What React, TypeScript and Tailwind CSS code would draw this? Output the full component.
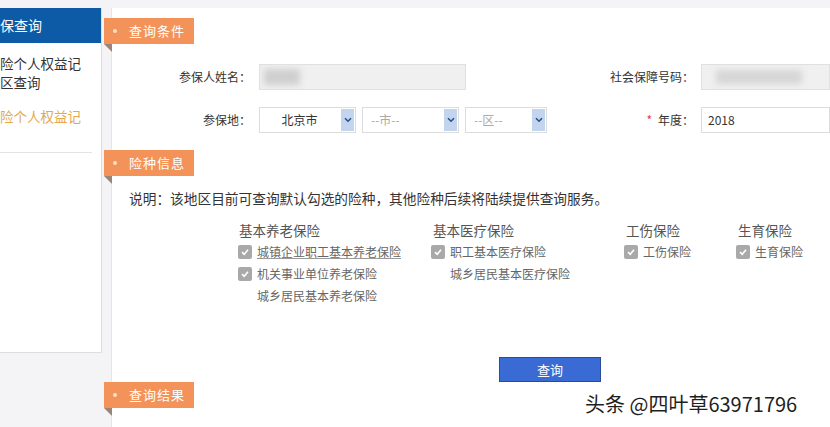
import React from 'react'

const font = { fontFamily: '"Noto Sans CJK SC", "Noto Sans", sans-serif' }

const Tab = ({ label }: { label: string }) => (
  <div className="relative -ml-[8px] w-[90px]">
    <div className="h-[26px] bg-[#f3935a] flex items-center text-white text-[13px]">
      <span className="ml-[9px] w-[4px] h-[4px] rounded-full bg-[#fde2c8]" />
      <span className="ml-[12px] tracking-[1px]">{label}</span>
    </div>
    {/* ribbon fold */}
    <div className="w-0 h-0 border-t-[8px] border-t-[#9c8478] border-l-[8px] border-l-transparent" />
  </div>
)

const Check = () => (
  <span className="w-[14px] h-[14px] rounded-[2px] bg-[#a9a9a9] flex items-center justify-center shrink-0">
    <svg width="10" height="10" viewBox="0 0 10 10">
      <path d="M2 5.2 L4.2 7.3 L8 2.8" stroke="#fff" strokeWidth="1.6" fill="none" />
    </svg>
  </span>
)

const Item = ({ label, checked, underline }: { label: string; checked?: boolean; underline?: boolean }) => (
  <div className="h-[22px] flex items-center">
    {checked ? <Check /> : <span className="w-[14px] shrink-0" />}
    <span className={`ml-[5px] text-[12px] text-[#666] ${underline ? 'underline decoration-[#999]' : ''}`}>{label}</span>
  </div>
)

const Select = ({ text, w, dim }: { text: string; w: string; dim?: boolean }) => (
  <div className={`${w} h-[26px] border border-[#dcdcdc] bg-white flex items-center justify-between pl-[4px]`}>
    <span className={`flex-1 text-[12px] ${dim ? 'text-[#aaa] pl-[4px]' : 'text-[#333] text-center pr-[6px]'}`}>{text}</span>
    <span className="w-[13px] h-[22px] mr-[1px] bg-[#c3d4ee] flex items-center justify-center">
      <svg width="8" height="6" viewBox="0 0 8 6">
        <path d="M1 1.2 L4 4.2 L7 1.2" stroke="#2c4f8c" strokeWidth="1.6" fill="none" />
      </svg>
    </span>
  </div>
)

export default function App() {
  return (
    <div className="relative w-[830px] h-[427px] overflow-hidden bg-[#f4f4f6] flex pt-[8px]" style={font}>
      {/* Sidebar */}
      <aside className="w-[102px] h-[345px] shrink-0 bg-white border-r border-b border-[#dedede] flex flex-col">
        <div className="h-[35px] bg-[#0d5aa7] text-white text-[14px] flex items-center">保查询</div>
        <div className="pt-[11px] text-[13.5px] text-[#333] leading-[19px]">
          <div>险个人权益记</div>
          <div>区查询</div>
        </div>
        <div className="mt-[15px] text-[13.5px] text-[#e3a94f] leading-[19px]">险个人权益记</div>
        <div className="mt-[26px] w-[92px] border-t border-[#e3e3e3]" />
      </aside>

      {/* Main panel */}
      <main className="ml-[9px] flex-1 bg-white border-l border-[#e6e6e6] pt-[10px] flex flex-col">
        <Tab label="查询条件" />

        <div className="mt-[12px] flex items-center text-[12px] text-[#333]">
          <span className="w-[139px] text-right">参保人姓名：</span>
          <div className="ml-[8px] w-[207px] h-[26px] bg-[#f0f0f0] border border-[#e0e0e0] relative overflow-hidden">
            <div className="absolute left-[4px] top-[4px] w-[36px] h-[16px] bg-[#cfcfcf] blur-[3px]" />
          </div>
          <span className="w-[228px] text-right">社会保障号码：</span>
          <div className="ml-[7px] flex-1 h-[26px] bg-[#f0f0f0] border border-[#e0e0e0] relative overflow-hidden">
            <div className="absolute left-[14px] top-[5px] w-[86px] h-[14px] bg-[#d6d6d6] blur-[3px]" />
          </div>
        </div>

        <div className="mt-[17px] flex items-center text-[12px] text-[#333]">
          <span className="w-[139px] text-right">参保地：</span>
          <div className="ml-[8px] flex gap-[6px]">
            <Select text="北京市" w="w-[97px]" />
            <Select text="--市--" w="w-[97px]" dim />
            <Select text="--区--" w="w-[82px]" dim />
          </div>
          <span className="w-[147px] text-right">
            <span className="text-[#e23b3b] mr-[6px]">*</span>年度：
          </span>
          <div className="ml-[7px] flex-1 h-[26px] border border-[#dcdcdc] flex items-center pl-[6px]">2018</div>
        </div>

        <div className="mt-[17px]">
          <Tab label="险种信息" />
        </div>

        <p className="mt-[4px] ml-[17px] text-[13.7px] text-[#333] leading-[20px]">
          说明：该地区目前可查询默认勾选的险种，其他险种后续将陆续提供查询服务。
        </p>

        <div className="mt-[12px] ml-[126px] flex">
          <div className="w-[193px]">
            <div className="h-[20px] ml-[1px] text-[13.5px] text-[#555] leading-[20px]">基本养老保险</div>
            <div className="mt-[1px]">
              <Item label="城镇企业职工基本养老保险" checked underline />
              <Item label="机关事业单位养老保险" checked />
              <Item label="城乡居民基本养老保险" />
            </div>
          </div>
          <div className="w-[193px]">
            <div className="h-[20px] ml-[2px] text-[13.5px] text-[#555] leading-[20px]">基本医疗保险</div>
            <div className="mt-[1px]">
              <Item label="职工基本医疗保险" checked />
              <Item label="城乡居民基本医疗保险" />
            </div>
          </div>
          <div className="w-[112px]">
            <div className="h-[20px] ml-[2px] text-[13.5px] text-[#555] leading-[20px]">工伤保险</div>
            <div className="mt-[1px]">
              <Item label="工伤保险" checked />
            </div>
          </div>
          <div>
            <div className="h-[20px] ml-[2px] text-[13.5px] text-[#555] leading-[20px]">生育保险</div>
            <div className="mt-[1px]">
              <Item label="生育保险" checked />
            </div>
          </div>
        </div>

        <div className="mt-[50px] ml-[387px]">
          <button className="w-[102px] h-[25px] bg-[#3a6bd4] border border-[#2a4a9a] text-white text-[13px] flex items-center justify-center">
            查询
          </button>
        </div>

        <Tab label="查询结果" />
      </main>

      {/* watermark */}
      <div className="absolute left-[585px] top-[390px] text-[20px] text-[#1f1f1f] leading-[28px] [text-shadow:0_0_2px_#fff,0_0_1px_#fff]">
        头条 @四叶草63971796
      </div>
    </div>
  )
}
